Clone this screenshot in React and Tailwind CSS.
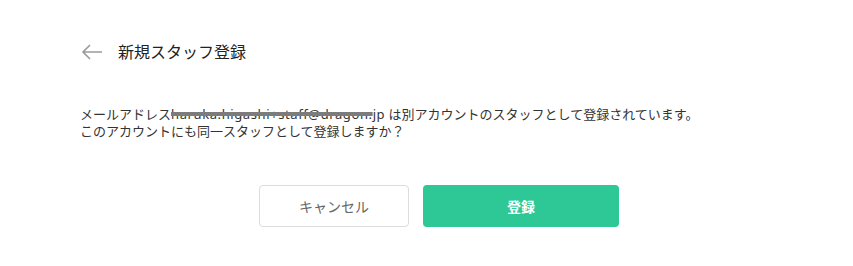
import React from "react";

const ArrowLeft = () => (
  <svg width="22" height="16" viewBox="0 0 22 16" fill="none" className="text-[#9a9a9a]">
    <path d="M21 8H2M9 1L2 8l7 7" stroke="currentColor" strokeWidth="1.6" />
  </svg>
);

const App = () => {
  return (
    <div
      className="w-[853px] h-[266px] bg-white text-[#333] overflow-hidden"
      style={{ fontFamily: '"Noto Sans", "Noto Sans CJK JP", sans-serif' }}
    >
      <div className="flex items-center pl-[81px] pt-[40px] h-[64px]">
        <button className="flex items-center">
          <ArrowLeft />
        </button>
        <h1 className="ml-[15px] text-[16px] leading-[24px] text-[#222]">新規スタッフ登録</h1>
      </div>

      <div className="pl-[80px] mt-[42px] text-[13px] leading-[17px]">
        <p>
          メールアドレス
          <span className="tracking-[0.6px] line-through decoration-[4px] decoration-[#7c7c7c]">haruka.higashi+staff@dragon.</span>
          <span className="tracking-[0.6px]">jp</span> は別アカウントのスタッフとして登録されています。
        </p>
        <p>このアカウントにも同一スタッフとして登録しますか？</p>
      </div>

      <div className="flex gap-[14px] pl-[259px] mt-[45px]">
        <button className="w-[150px] h-[42px] rounded-[4px] border border-[#dcdcdc] bg-white text-[14px] text-[#666]">
          キャンセル
        </button>
        <button className="w-[196px] h-[42px] rounded-[4px] bg-[#2ec796] text-[14px] font-bold text-white">
          登録
        </button>
      </div>
    </div>
  );
};

export default App;
